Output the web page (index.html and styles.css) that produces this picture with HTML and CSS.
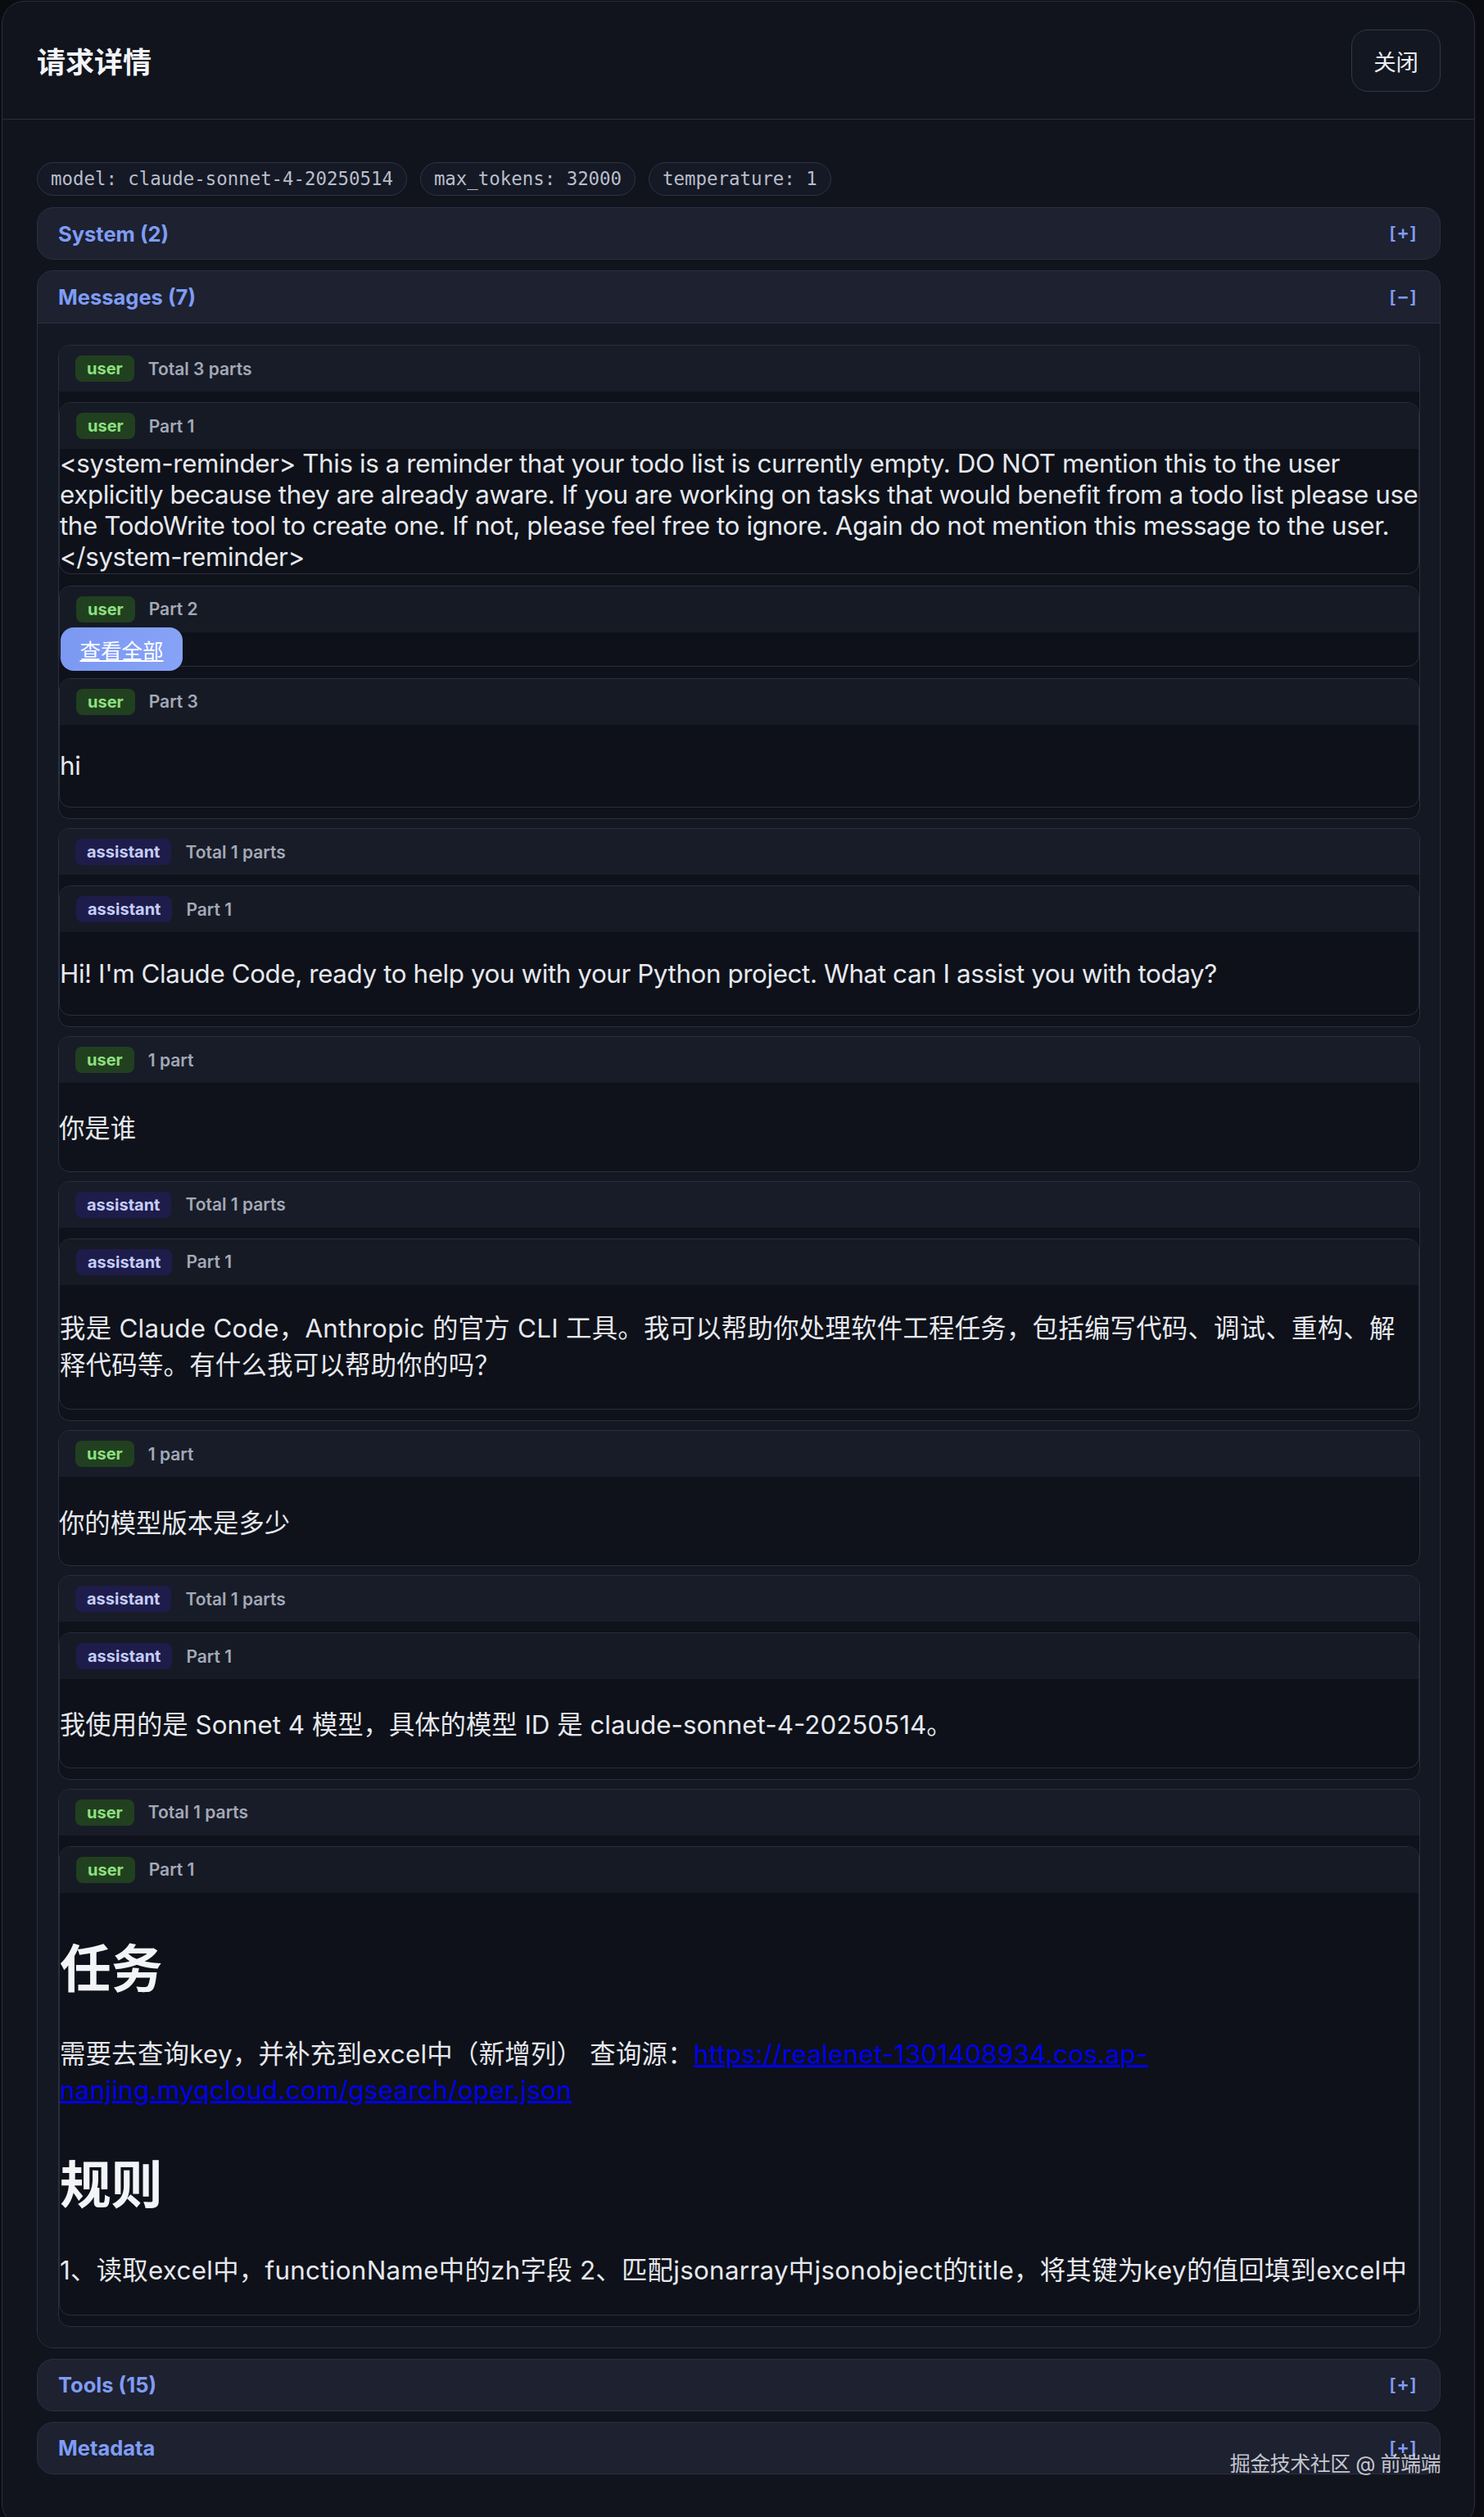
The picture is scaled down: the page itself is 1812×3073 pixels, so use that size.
FILE: index.html
```html
<!DOCTYPE html>
<html lang="zh-CN">
<head>
    <meta charset="UTF-8">
    <title>请求详情</title>
    <link rel="stylesheet" href="styles.css">
</head>
<body>
    <div class="modal">
        <div class="modal-header">
            <h2>请求详情</h2>
            <button class="close-btn">关闭</button>
        </div>

        <div class="modal-body">
            <div class="tags">
                <span class="tag">model: claude-sonnet-4-20250514</span>
                <span class="tag">max_tokens: 32000</span>
                <span class="tag">temperature: 1</span>
            </div>

            <div class="section">
                <div class="section-head">
                    <span>System (2)</span>
                    <span class="toggle">[+]</span>
                </div>
            </div>

            <div class="section">
                <div class="section-head open">
                    <span>Messages (7)</span>
                    <span class="toggle">[−]</span>
                </div>
                <div class="section-body">

                    <!-- message 1 -->
                    <div class="msg">
                        <div class="msg-head">
                            <span class="role user">user</span>
                            <span class="meta">Total 3 parts</span>
                        </div>
                        <div class="msg-body parts">
                            <div class="part">
                                <div class="msg-head">
                                    <span class="role user">user</span>
                                    <span class="meta">Part 1</span>
                                </div>
                                <div class="part-body plain en">&lt;system-reminder&gt; This is a reminder that your todo list is currently empty. DO NOT mention this to the user explicitly because they are already aware. If you are working on tasks that would benefit from a todo list please use the TodoWrite tool to create one. If not, please feel free to ignore. Again do not mention this message to the user. &lt;/system-reminder&gt;</div>
                            </div>
                            <div class="part">
                                <div class="msg-head">
                                    <span class="role user">user</span>
                                    <span class="meta">Part 2</span>
                                </div>
                                <div class="part-body collapsed"></div>
                                <button class="expand-btn">查看全部</button>
                            </div>
                            <div class="part">
                                <div class="msg-head">
                                    <span class="role user">user</span>
                                    <span class="meta">Part 3</span>
                                </div>
                                <div class="part-body en">
                                    <p>hi</p>
                                </div>
                            </div>
                        </div>
                    </div>

                    <!-- message 2 -->
                    <div class="msg">
                        <div class="msg-head">
                            <span class="role assistant">assistant</span>
                            <span class="meta">Total 1 parts</span>
                        </div>
                        <div class="msg-body parts">
                            <div class="part">
                                <div class="msg-head">
                                    <span class="role assistant">assistant</span>
                                    <span class="meta">Part 1</span>
                                </div>
                                <div class="part-body en">
                                    <p>Hi! I'm Claude Code, ready to help you with your Python project. What can I assist you with today?</p>
                                </div>
                            </div>
                        </div>
                    </div>

                    <!-- message 3 -->
                    <div class="msg">
                        <div class="msg-head">
                            <span class="role user">user</span>
                            <span class="meta">1 part</span>
                        </div>
                        <div class="msg-body">
                            <p>你是谁</p>
                        </div>
                    </div>

                    <!-- message 4 -->
                    <div class="msg">
                        <div class="msg-head">
                            <span class="role assistant">assistant</span>
                            <span class="meta">Total 1 parts</span>
                        </div>
                        <div class="msg-body parts">
                            <div class="part">
                                <div class="msg-head">
                                    <span class="role assistant">assistant</span>
                                    <span class="meta">Part 1</span>
                                </div>
                                <div class="part-body zh">
                                    <p>我是 Claude Code，Anthropic 的官方 CLI 工具。我可以帮助你处理软件工程任务，包括编写代码、调试、重构、解释代码等。有什么我可以帮助你的吗？</p>
                                </div>
                            </div>
                        </div>
                    </div>

                    <!-- message 5 -->
                    <div class="msg">
                        <div class="msg-head">
                            <span class="role user">user</span>
                            <span class="meta">1 part</span>
                        </div>
                        <div class="msg-body">
                            <p>你的模型版本是多少</p>
                        </div>
                    </div>

                    <!-- message 6 -->
                    <div class="msg">
                        <div class="msg-head">
                            <span class="role assistant">assistant</span>
                            <span class="meta">Total 1 parts</span>
                        </div>
                        <div class="msg-body parts">
                            <div class="part">
                                <div class="msg-head">
                                    <span class="role assistant">assistant</span>
                                    <span class="meta">Part 1</span>
                                </div>
                                <div class="part-body">
                                    <p>我使用的是 Sonnet 4 模型，具体的模型 ID 是 claude-sonnet-4-20250514。</p>
                                </div>
                            </div>
                        </div>
                    </div>

                    <!-- message 7 -->
                    <div class="msg">
                        <div class="msg-head">
                            <span class="role user">user</span>
                            <span class="meta">Total 1 parts</span>
                        </div>
                        <div class="msg-body parts">
                            <div class="part">
                                <div class="msg-head">
                                    <span class="role user">user</span>
                                    <span class="meta">Part 1</span>
                                </div>
                                <div class="part-body zh">
                                    <h1>任务</h1>
                                    <p>需要去查询key，并补充到excel中（新增列） 查询源：<a href="#">https://realenet-1301408934.cos.ap-nanjing.myqcloud.com/gsearch/oper.json</a></p>
                                    <h1>规则</h1>
                                    <p>1、读取excel中，functionName中的zh字段 2、匹配jsonarray中jsonobject的title，将其键为key的值回填到excel中</p>
                                </div>
                            </div>
                        </div>
                    </div>

                </div>
            </div>

            <div class="section">
                <div class="section-head">
                    <span>Tools (15)</span>
                    <span class="toggle">[+]</span>
                </div>
            </div>

            <div class="section">
                <div class="section-head">
                    <span>Metadata</span>
                    <span class="toggle">[+]</span>
                </div>
            </div>
        </div>
    </div>

    <div class="watermark">掘金技术社区 @ 前端端</div>
</body>
</html>
```

FILE: styles.css
```css
* {
    box-sizing: border-box;
}

body {
    margin: 0;
    padding: 1px 0 0 2px;
    background: #0a0c11;
    font-family: Inter, "Noto Sans CJK SC", sans-serif;
    color: #e6e8ee;
    position: relative;
}

.modal {
    width: 1799px;
    background: #11141d;
    border: 1px solid #2a2e3a;
    border-radius: 28px;
    padding-bottom: 50px;
}

.modal-header {
    height: 144px;
    display: flex;
    align-items: center;
    justify-content: space-between;
    padding: 0 41px 0 42px;
    border-bottom: 1px solid #2a2e3a;
}

.modal-header h2 {
    margin: 0;
    font-size: 35px;
    font-weight: 700;
    color: #f2f4f8;
}

.close-btn {
    height: 76px;
    padding: 0 26px;
    background: #131722;
    border: 1px solid #323848;
    border-radius: 20px;
    color: #eceef3;
    font-family: Inter, "Noto Sans CJK SC", sans-serif;
    font-size: 27.4px;
}

.modal-body {
    padding: 52px 41px 0 42px;
}

.tags {
    display: flex;
    gap: 16px;
    margin-bottom: 14px;
}

.tag {
    height: 41px;
    line-height: 39px;
    padding: 0 16px;
    border: 1px solid #2e3444;
    border-radius: 21px;
    background: #151925;
    font-family: "DejaVu Sans Mono", monospace;
    font-size: 22.4px;
    color: #b9becb;
}

.section {
    border: 1px solid #2b3040;
    border-radius: 20px;
    background: #1d2130;
    margin-bottom: 13px;
    overflow: hidden;
}

.section-head {
    height: 62px;
    display: flex;
    align-items: center;
    justify-content: space-between;
    padding: 0 26px 0 25px;
    font-size: 25.5px;
    font-weight: 700;
    color: #7f9cf5;
}

.section-head.open {
    height: 64px;
    border-bottom: 1px solid #2b3040;
}

.toggle {
    font-family: "DejaVu Sans Mono", monospace;
    font-size: 21px;
    font-weight: 700;
}

.section-body {
    background: #141823;
    padding: 26px 24px 25px 25px;
    display: flex;
    flex-direction: column;
    gap: 11px;
}

.msg {
    border: 1px solid #2a2f3d;
    border-radius: 14px;
    background: #0f121a;
    overflow: hidden;
}

.msg-head {
    height: 56px;
    display: flex;
    align-items: center;
    gap: 17px;
    padding: 0 20px;
    background: #181c28;
}

.role {
    height: 32px;
    line-height: 32px;
    padding: 0 14px;
    border-radius: 8px;
    font-size: 20px;
    font-weight: 700;
}

.role.user {
    background: #21401f;
    color: #8ee07f;
}

.role.assistant {
    background: #1e1c4a;
    color: #c5cdfb;
}

.meta {
    font-size: 21px;
    font-weight: 600;
    color: #a3a9b7;
}

.msg-body {
    font-size: 31.35px;
}

.msg-body.parts {
    display: flex;
    flex-direction: column;
    gap: 14px;
    padding: 13px 0 13px;
}

.part {
    position: relative;
    border: 1px solid #2a2f3d;
    border-radius: 14px;
    background: #0e1119;
}

.part .msg-head {
    background: #161a25;
    border-radius: 13px 13px 0 0;
}

.part-body {
    font-size: 31.35px;
    border-radius: 0 0 13px 13px;
}

.part-body.plain {
    line-height: 1.21;
}

/* SF-like width for latin text */
.en {
    letter-spacing: -0.4px;
}

.part-body.collapsed {
    height: 41px;
}

.expand-btn {
    position: absolute;
    left: 1px;
    top: 50px;
    width: 149px;
    height: 53px;
    border: none;
    border-radius: 16px;
    background: linear-gradient(90deg, #7c99f3, #86a3f6);
    color: #fff;
    font-family: Inter, "Noto Sans CJK SC", sans-serif;
    font-size: 25.5px;
    text-decoration: underline;
}

p {
    margin: 31.35px 0;
}

.zh p {
    line-height: 1.42;
    letter-spacing: 0.3px;
}

h1 {
    font-size: 62.7px;
    font-weight: 700;
    margin: 42px 0;
    color: #f3f4f7;
}

a {
    color: #0000ee;
}

.watermark {
    position: absolute;
    right: 53px;
    top: 2988px;
    font-size: 25px;
    color: rgba(235, 235, 240, 0.82);
    letter-spacing: -0.5px;
}
```
